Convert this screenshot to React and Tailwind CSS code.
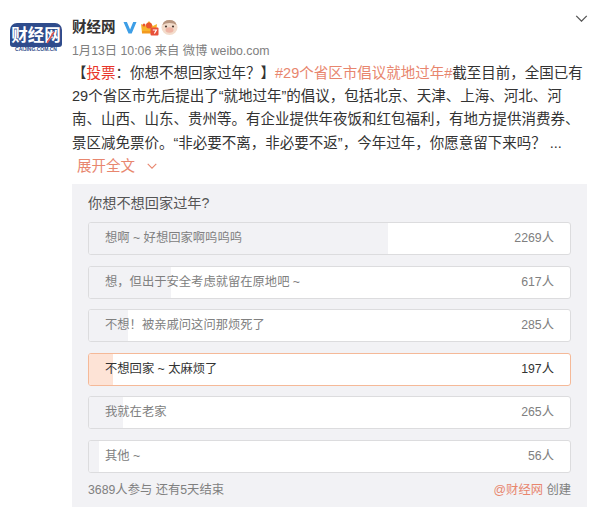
import React from 'react';

const FONT = "font-['Liberation_Sans','Noto_Sans_CJK_SC',sans-serif]";

const options = [
  { label: '想啊 ~ 好想回家啊呜呜呜', count: '2269人', bar: 'w-[299px]' },
  { label: '想，但出于安全考虑就留在原地吧 ~', count: '617人', bar: 'w-[82px]' },
  { label: '不想！被亲戚问这问那烦死了', count: '285人', bar: 'w-[39px]' },
  { label: '不想回家 ~ 太麻烦了', count: '197人', bar: 'w-[24px]', picked: true },
  { label: '我就在老家', count: '265人', bar: 'w-[34px]' },
  { label: '其他 ~', count: '56人', bar: 'w-[10px]' },
];

function Logo() {
  return (
    <div className="relative w-[52px] h-[28px] overflow-hidden flex flex-col items-center">
      <div className="w-full h-[24px] bg-[#2f4c8c] rounded-t-[7px] rounded-b-[3px] text-center text-white text-[16.500px] leading-[24px] font-bold tracking-[0px] whitespace-nowrap overflow-hidden">财经网</div>
      <div className="w-full h-[4px] text-[#2f4c8c] text-[5px] leading-[4px] text-center font-bold whitespace-nowrap">CAIJING.COM.CN</div>
      <svg className="absolute left-[36px] top-[8px]" width="10" height="13" viewBox="0 0 10 13">
        <path d="M1 12L8 1" stroke="#d9534f" strokeWidth="1.500" />
      </svg>
    </div>
  );
}

function Chevron({ className }) {
  return (
    <svg className={className} viewBox="0 0 14 8" fill="none" stroke="currentColor" strokeWidth="1.500">
      <path d="M1 1l6 6 6-6" />
    </svg>
  );
}

function Badges() {
  return (
    <div className="flex items-center ml-[7px]">
      <svg width="14" height="13" viewBox="0 0 14 13">
        <path d="M0.500 1h3.400l3.200 7.400L10.200 1h3.300L8.700 12.500H5.500z" fill="#3d9ee6" />
      </svg>
      <svg className="ml-[3px]" width="19" height="17" viewBox="0 0 19 17">
        <path d="M1 5l4 2 4-5 4 5 4-2-1 9H2z" fill="#f7b32b" />
        <circle cx="9" cy="6.500" r="3" fill="#e9552f" />
        <circle cx="4" cy="6" r="1.500" fill="#e9552f" />
        <rect x="2" y="12" width="11" height="2.500" fill="#f39a1f" />
        <rect x="10.500" y="8.500" width="8" height="8" rx="1" fill="#e8503a" />
        <path d="M12.800 11h3.600l-2 3.500" fill="none" stroke="#fff" strokeWidth="1.200" />
      </svg>
      <svg className="ml-[2px]" width="17" height="16" viewBox="0 0 17 16">
        <ellipse cx="8.500" cy="8.500" rx="8" ry="7.500" fill="#f3dccb" />
        <path d="M1.500 6q1-5 7-5t7 5q-3-2-7-2t-7 2z" fill="#b89680" />
        <circle cx="5" cy="7.500" r="1.100" fill="#4b3a30" />
        <circle cx="12" cy="7.500" r="1.100" fill="#4b3a30" />
        <ellipse cx="8.500" cy="11" rx="4" ry="2.800" fill="#eeb5a5" />
      </svg>
    </div>
  );
}

function Option({ label, count, bar, picked }) {
  return (
    <div className={`relative h-[33px] rounded-[3px] border bg-white overflow-hidden ${picked ? 'border-[#f5b998]' : 'border-[#dcdcde]'}`}>
      <div className={`absolute left-0 top-0 bottom-0 ${bar} ${picked ? 'bg-[#fde3d6]' : 'bg-[#f2f2f5]'}`} />
      <div className={`relative flex items-center justify-between h-full px-[16px] text-[12.300px] ${picked ? 'text-[#333]' : 'text-[#808080]'}`}>
        <span>{label}</span>
        <span>{count}</span>
      </div>
    </div>
  );
}

export default function App() {
  return (
    <div className={`w-[600px] h-[518px] bg-white flex ${FONT}`}>
      <div className="w-[72px] pl-[10px] pt-[23px] shrink-0">
        <Logo />
      </div>
      <div className="w-[515px] shrink-0">
        <div className="flex items-start justify-between pt-[17px] h-[42px]">
          <div className="flex items-center h-[20px]">
            <span className="text-[14.500px] font-bold text-[#333] leading-[20px]">财经网</span>
            <Badges />
          </div>
          <Chevron className="w-[13px] h-[7px] mt-[-2px] mr-[-1px] text-[#555]" />
        </div>
        <div className="text-[12.300px] pt-[1px] leading-[16px] text-[#808080] h-[20px]">1月13日 10:06 来自 微博 weibo.com</div>
        <div className="text-[14.500px] leading-[23.200px] text-[#333] whitespace-nowrap">
          <div>【<span className="text-[#e8352a]">投票</span>：你想不想回家过年？】<span className="text-[#e8866e]">#29个省区市倡议就地过年#</span>截至目前，全国已有</div>
          <div>29个省区市先后提出了“就地过年”的倡议，包括北京、天津、上海、河北、河</div>
          <div>南、山西、山东、贵州等。有企业提供年夜饭和红包福利，有地方提供消费券、</div>
          <div>景区减免票价。“非必要不离，非必要不返”，今年过年，你愿意留下来吗？ ...</div>
          <div className="flex items-center text-[#e8866e] pl-[5px]">
            展开全文
            <Chevron className="w-[10px] h-[6px] ml-[12px]" />
          </div>
        </div>
        <div className="mt-[6px] h-[323px] bg-[#f2f2f5] px-[16px]">
          <div className="h-[38px] pt-[9px] text-[14.200px] leading-[20px] text-[#555]">你想不想回家过年?</div>
          <div className="flex flex-col gap-[10.500px]">
            {options.map((o) => (
              <Option key={o.label} {...o} />
            ))}
          </div>
          <div className="flex justify-between mt-[9.500px] text-[12.300px] leading-[16px] text-[#808080]">
            <span>3689人参与 还有5天结束</span>
            <span><span className="text-[#e8866e]">@财经网</span> 创建</span>
          </div>
        </div>
      </div>
    </div>
  );
}
